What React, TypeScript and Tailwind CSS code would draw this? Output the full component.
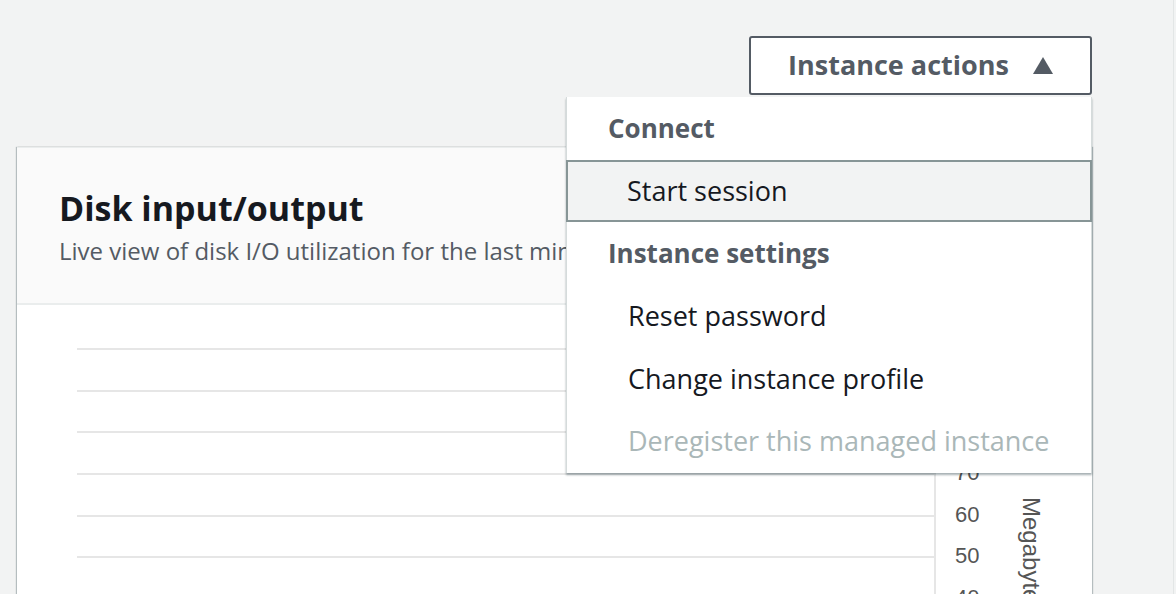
import React from "react";

const gridYs = [348, 390, 431, 473, 515, 556];

function Chart() {
  return (
    <div className="relative h-full w-full">
      {gridYs.map((y) => (
        <div
          key={y}
          className="absolute left-[60px] w-[858px] h-[2px] bg-[#e6e6e6]"
          style={{ top: y - 305 }}
        />
      ))}
      <div className="absolute left-[917px] top-[30px] w-[2px] h-[300px] bg-[#e6e6e6]" />
      {[
        { y: 473, t: "70" },
        { y: 515, t: "60" },
        { y: 556, t: "50" },
        { y: 598, t: "40" },
      ].map((l) => (
        <div
          key={l.t}
          className="absolute left-[938px] text-[22px] leading-none text-[#555555]"
          style={{ top: l.y - 305 - 11, fontFamily: '"Liberation Sans", Arial, sans-serif' }}
        >
          {l.t}
        </div>
      ))}
      <div
        className="absolute left-[1026px] top-[192px] text-[24px] leading-none text-[#555555] origin-top-left rotate-90 whitespace-nowrap"
        style={{ fontFamily: '"Liberation Sans", Arial, sans-serif' }}
      >
        Megabytes
      </div>
    </div>
  );
}

export default function App() {
  return (
    <div
      className="relative w-[1176px] h-[594px] overflow-hidden bg-[#f2f3f3]"
      style={{ fontFamily: '"Open Sans", "Noto Sans", sans-serif' }}
    >
      <div className="absolute right-0 top-0 h-full w-[3px] border-l border-[#e3e6e6]" />
      <div className="flex justify-end pr-[84px] pt-[36px]">
        <button className="flex items-center gap-[24px] h-[59px] w-[343px] justify-center rounded-[3px] border-2 border-[#545b64] bg-white text-[27px] font-bold text-[#545b64]">
          <span>Instance actions</span>
          <svg width="20" height="17" viewBox="0 0 20 17">
            <path d="M10 0 L20 17 L0 17 Z" fill="#545b64" />
          </svg>
        </button>
      </div>

      <div className="ml-[17px] mt-[52px] w-[1075px] h-[460px] bg-white border-t border-[#eaeded] shadow-[-1px_0_1px_rgba(0,28,36,0.25),1px_0_1px_rgba(0,28,36,0.25)] flex flex-col">
        <div className="h-[157px] bg-[#fafafa] border-b-2 border-[#eaeded] pl-[42px] pt-[38px]">
          <div className="text-[34px] font-bold leading-[44px] text-[#16191f]">Disk input/output</div>
          <div className="mt-[6px] text-[24px] leading-[30px] text-[#545b64] whitespace-nowrap">
            Live view of disk I/O utilization for the last minute
          </div>
        </div>
        <div className="flex-1">
          <Chart />
        </div>
      </div>

      <div className="absolute left-[566px] top-[97px] w-[526px] h-[376px] bg-white border-l border-r border-[#d5dbdb] shadow-[0_2px_2px_rgba(0,28,36,0.35)] flex flex-col">
        <div className="h-[63px] flex items-center pl-[41px] text-[26px] font-bold text-[#545b64]">Connect</div>
        <div className="h-[62px] flex items-center pl-[59px] text-[27px] text-[#16191f] bg-[#f2f3f3] border-2 border-[#879596] -mx-px">
          Start session
        </div>
        <div className="h-[63px] flex items-center pl-[41px] text-[26px] font-bold text-[#545b64]">Instance settings</div>
        <div className="h-[63px] flex items-center pl-[61px] text-[27px] text-[#16191f]">Reset password</div>
        <div className="h-[62px] flex items-center pl-[61px] text-[27px] text-[#16191f]">Change instance profile</div>
        <div className="h-[62px] flex items-center pl-[61px] text-[27px] text-[#aab7b8]">Deregister this managed instance</div>
      </div>
    </div>
  );
}
